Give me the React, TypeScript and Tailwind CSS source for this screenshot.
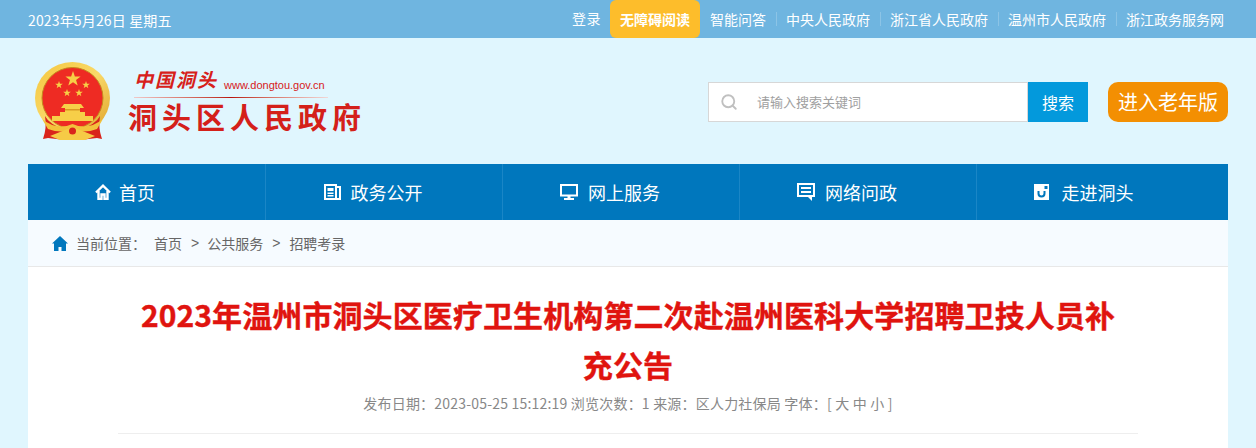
import { Search } from "lucide-react";

const topLinks = ["智能问答", "中央人民政府", "浙江省人民政府", "温州市人民政府", "浙江政务服务网"];

function star(cx: number, cy: number, r: number) {
  const pts: string[] = [];
  for (let i = 0; i < 10; i++) {
    const rad = i % 2 === 0 ? r : r * 0.4;
    const a = (Math.PI / 5) * i - Math.PI / 2;
    pts.push(`${(cx + rad * Math.cos(a)).toFixed(2)},${(cy + rad * Math.sin(a)).toFixed(2)}`);
  }
  return pts.join(" ");
}

function Emblem() {
  return (
    <svg width="75" height="79" viewBox="0 0 75 79" className="shrink-0">
      <defs>
        <linearGradient id="ring" x1="0" y1="0" x2="1" y2="1">
          <stop offset="0" stopColor="#f5c73f" />
          <stop offset="0.5" stopColor="#f9d968" />
          <stop offset="1" stopColor="#dfa128" />
        </linearGradient>
      </defs>
      <ellipse cx="37.500" cy="36" rx="37.500" ry="36" fill="url(#ring)" />
      <circle cx="37.500" cy="36" r="30.500" fill="#ee2b23" stroke="#c58a1e" strokeWidth="1" />
      <polygon fill="#f7d046" points={star(38, 17, 8)} />
      <polygon fill="#f7d046" points={star(24, 23, 4)} />
      <polygon fill="#f7d046" points={star(51, 23, 4)} />
      <polygon fill="#f7d046" points={star(32, 31, 4)} />
      <polygon fill="#f7d046" points={star(44, 31, 4)} />
      <path d="M29 42 H46 L49 46 H45 V50 H50 V54 H58 V59 H17 V54 H25 V50 H30 V46 H26 Z" fill="#f7cf48" />
      <rect x="30" y="47" width="15" height="1.500" fill="#d99a22" />
      <path d="M10 54 Q14 62 30 68 L30 78 L13 76 L8 77 Q12 66 10 54 Z" fill="#d9241c" />
      <path d="M65 54 Q61 62 45 68 L45 78 L62 76 L67 77 Q63 66 65 54 Z" fill="#d9241c" />
      <path d="M7 57 Q22 69 37.500 62 Q53 69 68 57 L62 67 Q48 72 37.500 67 Q27 72 13 67 Z" fill="#f3c23c" />
      <path d="M15 74 L37.500 65 L60 74 L50 78 H25 Z" fill="#f6cb46" />
      <circle cx="37.500" cy="69" r="3.500" fill="#d9241c" />
    </svg>
  );
}

function HomeIcon() {
  return (
    <svg width="16" height="16" viewBox="0 0 16 16" fill="none" stroke="#fff" strokeWidth="2.400">
      <path d="M1 8.500L8 1.700l7 6.800" />
      <path d="M3.500 7v8h3v-4.500h3V15h3V7" />
    </svg>
  );
}

function NewsIcon() {
  return (
    <svg width="17" height="16" viewBox="0 0 17 16" fill="#fff">
      <path fillRule="evenodd" d="M0 0h13v2h4v14H0V0zm2 2v12h9V2H2zm1.500 2h6v3h-6V4zm0 4.500h6V10h-6V8.500zm0 2.500h6v1.500h-6V11zM13 4v10h2V4h-2z" />
    </svg>
  );
}

function MonitorIcon() {
  return (
    <svg width="18" height="16" viewBox="0 0 18 16" fill="#fff">
      <path fillRule="evenodd" d="M0 0h18v12.500H10.500V14H14v2H4v-2h3.500v-1.500H0V0zm2 2v8.500h14V2H2z" />
    </svg>
  );
}

function CommentIcon() {
  return (
    <svg width="18" height="18" viewBox="0 0 18 18" fill="#fff">
      <path fillRule="evenodd" d="M0 0h18v14h-3v4l-4-4H0V0zm2 2v10h14V2H2zm2 2h10v2H4V4zm0 4h10v2H4V8z" />
    </svg>
  );
}

function CameraIcon() {
  return (
    <svg width="15" height="16" viewBox="0 0 15 16">
      <rect width="15" height="16" fill="#fff" />
      <path d="M4.500 7v2.500a3 3 0 0 0 6 0V7" fill="none" stroke="#0077bd" strokeWidth="2" />
      <rect x="10.500" y="2" width="3" height="3" fill="#0077bd" />
    </svg>
  );
}

const navItems = [
  { label: "首页", icon: <HomeIcon />, cls: "w-[238px] gap-[8px] pr-[43px] border-r border-[#1a86c6]" },
  { label: "政务公开", icon: <NewsIcon />, cls: "w-[237px] gap-[10px] pr-[22px] border-r border-[#1a86c6]" },
  { label: "网上服务", icon: <MonitorIcon />, cls: "w-[237px] gap-[10px] pr-[22px] border-r border-[#1a86c6]" },
  { label: "网络问政", icon: <CommentIcon />, cls: "w-[237px] gap-[10px] pr-[22px] border-r border-[#1a86c6]" },
  { label: "走进洞头", icon: <CameraIcon />, cls: "w-[251px] gap-[13px] pr-[38px]" },
];

export default function App() {
  return (
    <div className="h-[448px] overflow-hidden bg-[#e0f6fe] font-['Noto_Sans_CJK_SC','Noto_Sans',sans-serif]">
      <header className="h-[38px] bg-[#6fb5e0] text-white">
        <div className="mx-auto flex h-full w-[1200px] items-start justify-between">
          <span className="pt-[10px] text-[14px] leading-[20px] tracking-[0.150px]">2023年5月26日 星期五</span>
          <div className="flex items-start pr-[4px] text-[14px]">
            <a className="pt-[8px] leading-[20px] tracking-[0.500px]">登录</a>
            <a className="ml-[9px] flex h-[38px] w-[90px] items-center justify-center rounded-[6px] bg-[#fdbd2b] font-bold">无障碍阅读</a>
            {topLinks.map((t, i) => (
              <a
                key={t}
                className={`mt-[12px] h-[14px] whitespace-nowrap leading-[14px] ${
                  i === 0 ? "pl-[10px]" : "border-l border-[#8cc4e6] pl-[9px]"
                } ${i === topLinks.length - 1 ? "" : "pr-[10px]"}`}
              >
                {t}
              </a>
            ))}
          </div>
        </div>
      </header>

      <div className="mx-auto flex h-[126px] w-[1200px] items-center">
        <div className="ml-[7px] flex items-center">
          <Emblem />
          <div className="ml-[18px] w-[240px] pt-[2px]">
            <div className="flex items-end">
              <span className="mb-[8px] pl-[6px] text-[19px] leading-[16px] font-bold tracking-[2px] text-[#d7201a] italic">中国洞头</span>
              <span className="ml-[6px] font-['Liberation_Sans',sans-serif] text-[11px] leading-[20px] text-[#d7201a]">www.dongtou.gov.cn</span>
            </div>
            <div className="mt-[2px] ml-[6px] h-px w-[194px] bg-gradient-to-r from-[#f0c8c8] via-[#b8100c] to-[#f0d8d8]"></div>
            <div className="whitespace-nowrap text-[29px] leading-[36px] font-bold tracking-[5px] text-[#d4201a]">洞头区人民政府</div>
          </div>
        </div>

        <div className="ml-auto flex items-center pt-[2px]">
          <div className="flex h-[40px] w-[320px] items-center border border-[#d7d7d7] bg-white">
            <Search size={18} strokeWidth={2.5} color="#c0c0c0" className="ml-[11px]" />
            <span className="ml-[19px] text-[13px] text-[#a0a0a0]">请输入搜索关键词</span>
          </div>
          <button className="h-[40px] w-[60px] bg-[#0399dc] text-[16px] text-white">搜索</button>
          <button className="ml-[20px] h-[40px] w-[120px] rounded-[10px] bg-[#f38f02] text-[20px] text-white">进入老年版</button>
        </div>
      </div>

      <nav className="mx-auto flex h-[56px] w-[1200px] bg-[#0077bd] text-white">
        {navItems.map((n) => (
          <div key={n.label} className={`flex items-center justify-center text-[18px] ${n.cls}`}>
            {n.icon}
            <span>{n.label}</span>
          </div>
        ))}
      </nav>

      <div className="mx-auto flex h-[47px] w-[1200px] items-center border-b border-[#e8e8e8] bg-[#f6fbff] pl-[24px] text-[14px] text-[#666]">
        <svg width="16" height="15" viewBox="0 0 16 15" fill="#0077bd">
          <path fillRule="evenodd" d="M8 0l8 7.500h-2V15H9.500v-4h-3v4H2V7.500H0L8 0z" />
        </svg>
        <span className="ml-[8px]">当前位置：</span>
        <span className="ml-[8px]">首页</span>
        <span className="mx-[9px] font-['Liberation_Sans',sans-serif]">&gt;</span>
        <span className="-ml-px">公共服务</span>
        <span className="mx-[9px] font-['Liberation_Sans',sans-serif]">&gt;</span>
        <span>招聘考录</span>
      </div>

      <main className="mx-auto h-[181px] w-[1200px] bg-white px-[90px]">
        <div className="border-b border-[#eeeeee] pb-[20px]">
          <h1 className="px-[15px] pt-[22px] text-center text-[30px] leading-[50px] font-bold tracking-[0.100px] text-[#e0140f] [-webkit-text-stroke:0.4px_#e0140f]">
            2023年温州市洞头区医疗卫生机构第二次赴温州医科大学招聘卫技人员补充公告
          </h1>
          <p className="mt-[4px] text-center text-[14px] leading-[20px] tracking-[0.200px] text-[#888]">
            发布日期：2023-05-25 15:12:19 浏览次数：1 来源：区人力社保局 字体：[ 大 中 小 ]
          </p>
        </div>
      </main>
    </div>
  );
}
